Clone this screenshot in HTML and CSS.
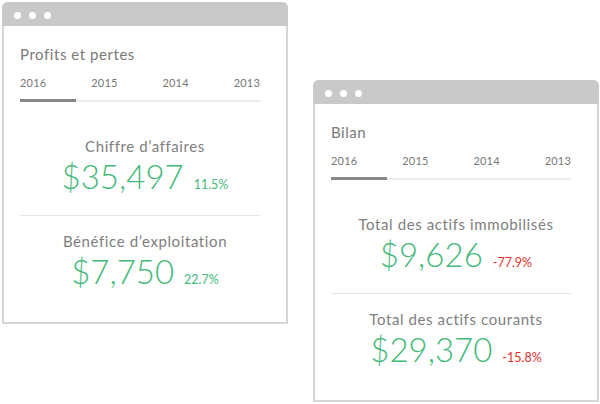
FILE: index.html
```html
<!DOCTYPE html>
<html lang="fr">
<head>
<meta charset="utf-8">
<title>Rapports</title>
<link rel="stylesheet" href="styles.css">
</head>
<body>
<div class="stage">
  <section class="window window-left">
    <div class="titlebar"><span class="dot"></span><span class="dot"></span><span class="dot"></span></div>
    <div class="content">
      <h2 class="title">Profits et pertes</h2>
      <div class="tabs">
        <div class="tab-labels"><span>2016</span><span>2015</span><span>2014</span><span>2013</span></div>
        <div class="track"><div class="active-bar"></div></div>
      </div>
      <div class="metric metric-first">
        <div class="label">Chiffre d’affaires</div>
        <div class="value"><span class="amount">$35,497</span><span class="change up">11.5%</span></div>
      </div>
      <div class="divider"></div>
      <div class="metric">
        <div class="label">Bénéfice d’exploitation</div>
        <div class="value"><span class="amount">$7,750</span><span class="change up">22.7%</span></div>
      </div>
    </div>
  </section>
  <section class="window window-right">
    <div class="titlebar"><span class="dot"></span><span class="dot"></span><span class="dot"></span></div>
    <div class="content">
      <h2 class="title">Bilan</h2>
      <div class="tabs">
        <div class="tab-labels"><span>2016</span><span>2015</span><span>2014</span><span>2013</span></div>
        <div class="track"><div class="active-bar"></div></div>
      </div>
      <div class="metric metric-first">
        <div class="label">Total des actifs immobilisés</div>
        <div class="value"><span class="amount">$9,626</span><span class="change down">-77.9%</span></div>
      </div>
      <div class="divider"></div>
      <div class="metric">
        <div class="label">Total des actifs courants</div>
        <div class="value"><span class="amount">$29,370</span><span class="change down">-15.8%</span></div>
      </div>
    </div>
  </section>
</div>
</body>
</html>
```

FILE: styles.css
```css
* { box-sizing: border-box; }
html, body { margin: 0; padding: 0; background: #fff; }
body {
  width: 600px;
  height: 404px;
  overflow: hidden;
  font-family: Lato, "Noto Sans", sans-serif;
  color: #777;
}
.stage {
  display: flex;
  align-items: flex-start;
  padding: 2px 0 0 2px;
  gap: 25px;
}
.window {
  width: 286px;
  height: 322px;
  border: 2px solid #d6d6d6;
  border-top: 0;
  border-radius: 6px 6px 0 0;
  background: #fff;
  display: flex;
  flex-direction: column;
}
.window-right { margin-top: 78px; }
.titlebar {
  height: 24px;
  margin: 0 -2px;
  background: #c9c9c9;
  border-radius: 6px 6px 0 0;
  display: flex;
  align-items: center;
  gap: 8px;
  padding: 2px 0 0 12px;
}
.dot {
  width: 7px;
  height: 7px;
  border-radius: 50%;
  background: #fff;
}
.content {
  padding: 19px 26px 0 16px;
  display: flex;
  flex-direction: column;
}
.title {
  margin: 0;
  font-size: 15px;
  font-weight: 400;
  line-height: 18px;
  letter-spacing: 0.55px;
  color: #7a7a7a;
}
.tabs { margin-top: 13px; }
.tab-labels {
  display: flex;
  justify-content: space-between;
  font-size: 11px;
  line-height: 14px;
  letter-spacing: 0.2px;
  color: #777;
}
.track {
  margin-top: 9px;
  height: 3px;
  background: linear-gradient(#fff 0 1px, #ececec 1px);
}
.active-bar {
  width: 56px;
  height: 3px;
  background: #878787;
}
.metric {
  display: flex;
  flex-direction: column;
  align-items: center;
  margin-right: -10px;
}
.metric-first { margin-top: 35px; }
.label {
  font-size: 15px;
  line-height: 18px;
  letter-spacing: 0.6px;
  color: #7e7e7e;
}
.value {
  display: flex;
  align-items: baseline;
  gap: 10px;
  margin-top: 2px;
}
.amount {
  font-size: 33px;
  font-weight: 300;
  line-height: 38px;
  color: #43b979;
}
.change {
  font-size: 12.5px;
  font-weight: 400;
}
.change.up { color: #43b979; }
.change.down { color: #e8302c; }
.divider {
  height: 1px;
  background: #e6e6e6;
  margin: 20px 0 16px;
}
```
